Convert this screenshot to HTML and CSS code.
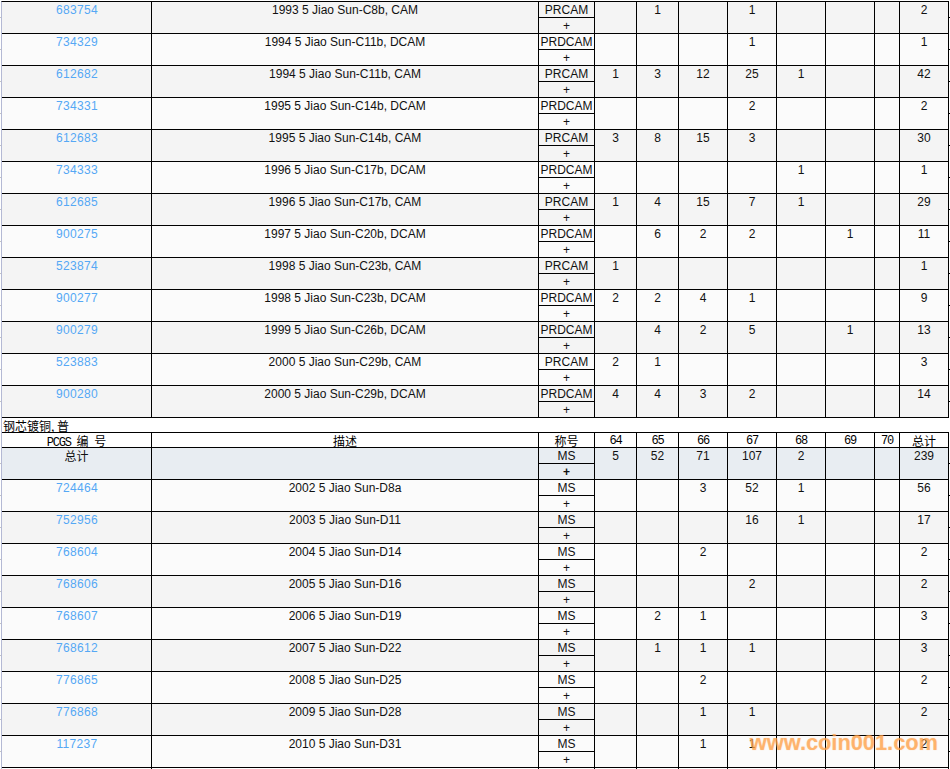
FILE: index.html
```html
<!DOCTYPE html>
<html lang="zh-CN">
<head>
<meta charset="utf-8">
<title>PCGS 5 Jiao</title>
<link rel="stylesheet" href="styles.css">
</head>
<body>
<div class="sheet">
<table class="coins">
<colgroup><col class="c-id"><col class="c-desc"><col class="c-grade"><col class="c-64"><col class="c-65"><col class="c-66"><col class="c-67"><col class="c-68"><col class="c-69"><col class="c-70"><col class="c-total"></colgroup>
<tbody>
<tr class="odd"><td class="id"><a href="#">683754</a></td><td class="desc">1993 5 Jiao Sun-C8b, CAM</td><td class="grade"><div class="g-top">PRCAM</div><div class="g-bot">+</div></td><td></td><td>1</td><td></td><td>1</td><td></td><td></td><td></td><td class="total">2</td></tr>
<tr class="even"><td class="id"><a href="#">734329</a></td><td class="desc">1994 5 Jiao Sun-C11b, DCAM</td><td class="grade"><div class="g-top">PRDCAM</div><div class="g-bot">+</div></td><td></td><td></td><td></td><td>1</td><td></td><td></td><td></td><td class="total">1</td></tr>
<tr class="odd"><td class="id"><a href="#">612682</a></td><td class="desc">1994 5 Jiao Sun-C11b, CAM</td><td class="grade"><div class="g-top">PRCAM</div><div class="g-bot">+</div></td><td>1</td><td>3</td><td>12</td><td>25</td><td>1</td><td></td><td></td><td class="total">42</td></tr>
<tr class="even"><td class="id"><a href="#">734331</a></td><td class="desc">1995 5 Jiao Sun-C14b, DCAM</td><td class="grade"><div class="g-top">PRDCAM</div><div class="g-bot">+</div></td><td></td><td></td><td></td><td>2</td><td></td><td></td><td></td><td class="total">2</td></tr>
<tr class="odd"><td class="id"><a href="#">612683</a></td><td class="desc">1995 5 Jiao Sun-C14b, CAM</td><td class="grade"><div class="g-top">PRCAM</div><div class="g-bot">+</div></td><td>3</td><td>8</td><td>15</td><td>3</td><td></td><td></td><td></td><td class="total">30</td></tr>
<tr class="even"><td class="id"><a href="#">734333</a></td><td class="desc">1996 5 Jiao Sun-C17b, DCAM</td><td class="grade"><div class="g-top">PRDCAM</div><div class="g-bot">+</div></td><td></td><td></td><td></td><td></td><td>1</td><td></td><td></td><td class="total">1</td></tr>
<tr class="odd"><td class="id"><a href="#">612685</a></td><td class="desc">1996 5 Jiao Sun-C17b, CAM</td><td class="grade"><div class="g-top">PRCAM</div><div class="g-bot">+</div></td><td>1</td><td>4</td><td>15</td><td>7</td><td>1</td><td></td><td></td><td class="total">29</td></tr>
<tr class="even"><td class="id"><a href="#">900275</a></td><td class="desc">1997 5 Jiao Sun-C20b, DCAM</td><td class="grade"><div class="g-top">PRDCAM</div><div class="g-bot">+</div></td><td></td><td>6</td><td>2</td><td>2</td><td></td><td>1</td><td></td><td class="total">11</td></tr>
<tr class="odd"><td class="id"><a href="#">523874</a></td><td class="desc">1998 5 Jiao Sun-C23b, CAM</td><td class="grade"><div class="g-top">PRCAM</div><div class="g-bot">+</div></td><td>1</td><td></td><td></td><td></td><td></td><td></td><td></td><td class="total">1</td></tr>
<tr class="even"><td class="id"><a href="#">900277</a></td><td class="desc">1998 5 Jiao Sun-C23b, DCAM</td><td class="grade"><div class="g-top">PRDCAM</div><div class="g-bot">+</div></td><td>2</td><td>2</td><td>4</td><td>1</td><td></td><td></td><td></td><td class="total">9</td></tr>
<tr class="odd"><td class="id"><a href="#">900279</a></td><td class="desc">1999 5 Jiao Sun-C26b, DCAM</td><td class="grade"><div class="g-top">PRDCAM</div><div class="g-bot">+</div></td><td></td><td>4</td><td>2</td><td>5</td><td></td><td>1</td><td></td><td class="total">13</td></tr>
<tr class="even"><td class="id"><a href="#">523883</a></td><td class="desc">2000 5 Jiao Sun-C29b, CAM</td><td class="grade"><div class="g-top">PRCAM</div><div class="g-bot">+</div></td><td>2</td><td>1</td><td></td><td></td><td></td><td></td><td></td><td class="total">3</td></tr>
<tr class="odd"><td class="id"><a href="#">900280</a></td><td class="desc">2000 5 Jiao Sun-C29b, DCAM</td><td class="grade"><div class="g-top">PRDCAM</div><div class="g-bot">+</div></td><td>4</td><td>4</td><td>3</td><td>2</td><td></td><td></td><td></td><td class="total">14</td></tr>
<tr class="section"><td colspan="11">钢芯镀铜, 普</td></tr>
<tr class="head"><td class="h-id"><span class="latin">PCGS</span> 编 号</td><td>描述</td><td>称号</td><td class="latin">64</td><td class="latin">65</td><td class="latin">66</td><td class="latin">67</td><td class="latin">68</td><td class="latin">69</td><td class="latin">70</td><td>总计</td></tr>
<tr class="sum"><td class="id cjk">总计</td><td class="desc"></td><td class="grade"><div class="g-top">MS</div><div class="g-bot">+</div></td><td>5</td><td>52</td><td>71</td><td>107</td><td>2</td><td></td><td></td><td class="total">239</td></tr>
<tr class="even"><td class="id"><a href="#">724464</a></td><td class="desc">2002 5 Jiao Sun-D8a</td><td class="grade"><div class="g-top">MS</div><div class="g-bot">+</div></td><td></td><td></td><td>3</td><td>52</td><td>1</td><td></td><td></td><td class="total">56</td></tr>
<tr class="odd"><td class="id"><a href="#">752956</a></td><td class="desc">2003 5 Jiao Sun-D11</td><td class="grade"><div class="g-top">MS</div><div class="g-bot">+</div></td><td></td><td></td><td></td><td>16</td><td>1</td><td></td><td></td><td class="total">17</td></tr>
<tr class="even"><td class="id"><a href="#">768604</a></td><td class="desc">2004 5 Jiao Sun-D14</td><td class="grade"><div class="g-top">MS</div><div class="g-bot">+</div></td><td></td><td></td><td>2</td><td></td><td></td><td></td><td></td><td class="total">2</td></tr>
<tr class="odd"><td class="id"><a href="#">768606</a></td><td class="desc">2005 5 Jiao Sun-D16</td><td class="grade"><div class="g-top">MS</div><div class="g-bot">+</div></td><td></td><td></td><td></td><td>2</td><td></td><td></td><td></td><td class="total">2</td></tr>
<tr class="even"><td class="id"><a href="#">768607</a></td><td class="desc">2006 5 Jiao Sun-D19</td><td class="grade"><div class="g-top">MS</div><div class="g-bot">+</div></td><td></td><td>2</td><td>1</td><td></td><td></td><td></td><td></td><td class="total">3</td></tr>
<tr class="odd"><td class="id"><a href="#">768612</a></td><td class="desc">2007 5 Jiao Sun-D22</td><td class="grade"><div class="g-top">MS</div><div class="g-bot">+</div></td><td></td><td>1</td><td>1</td><td>1</td><td></td><td></td><td></td><td class="total">3</td></tr>
<tr class="even"><td class="id"><a href="#">776865</a></td><td class="desc">2008 5 Jiao Sun-D25</td><td class="grade"><div class="g-top">MS</div><div class="g-bot">+</div></td><td></td><td></td><td>2</td><td></td><td></td><td></td><td></td><td class="total">2</td></tr>
<tr class="odd"><td class="id"><a href="#">776868</a></td><td class="desc">2009 5 Jiao Sun-D28</td><td class="grade"><div class="g-top">MS</div><div class="g-bot">+</div></td><td></td><td></td><td>1</td><td>1</td><td></td><td></td><td></td><td class="total">2</td></tr>
<tr class="even"><td class="id"><a href="#">117237</a></td><td class="desc">2010 5 Jiao Sun-D31</td><td class="grade"><div class="g-top">MS</div><div class="g-bot">+</div></td><td></td><td></td><td>1</td><td>1</td><td></td><td></td><td></td><td class="total">2</td></tr>
<tr class="stub"><td></td><td></td><td></td><td></td><td></td><td></td><td></td><td></td><td></td><td></td><td></td></tr>
</tbody>
</table>
<div class="watermark">www.coin001.com</div>
</div>
</body>
</html>
```
FILE: styles.css
```css
html, body {
  margin: 0;
  padding: 0;
  background: #fff;
}
.sheet {
  position: relative;
  width: 950px;
  height: 769px;
  overflow: hidden;
  padding: 1px 0 0 1px;
  box-sizing: border-box;
  font-family: "Liberation Sans", Arial, "Noto Sans CJK SC", sans-serif;
  font-size: 12px;
  color: #111;
}
.coins {
  table-layout: fixed;
  border-collapse: separate;
  border-spacing: 0;
  width: 948px;
  border-left: 1px solid #b4b9d4;
  border-top: 1px solid #000;
}
.c-id { width: 150px; }
.c-desc { width: 387px; }
.c-grade { width: 56px; }
.c-64, .c-65 { width: 42px; }
.c-66, .c-67, .c-68, .c-69, .c-total { width: 49px; }
.c-70 { width: 25px; }
.coins td {
  position: relative;
  box-sizing: border-box;
  height: 32px;
  padding: 1px 0 0;
  border-right: 1px solid #000;
  border-bottom: 1px solid #000;
  text-align: center;
  vertical-align: top;
  line-height: 14px;
}
.odd td { background: #f4f4f4; }
.even td { background: #fbfbfb; }
.sum td { background: #e8edf2; }
.id a {
  margin-left: 1px;
  color: #55a8f5;
  text-decoration: none;
  letter-spacing: 0.33px;
}
.cjk { font-family: "Noto Sans CJK SC", sans-serif; }
.coins td.grade { padding: 0; }
.g-top {
  box-sizing: border-box;
  height: 16px;
  padding-top: 1px;
  border-bottom: 1px solid #000;
  line-height: 14px;
}
.g-bot {
  height: 15px;
  padding-top: 1px;
  box-sizing: border-box;
  line-height: 14px;
}
.sum .g-bot { font-weight: bold; }
.total::after {
  content: "";
  position: absolute;
  left: 49px;
  top: 15px;
  width: 1px;
  height: 1px;
  background: #000;
}
.id::before {
  content: "";
  position: absolute;
  left: -2px;
  top: 15px;
  width: 1px;
  height: 1px;
  background: #c4c4c4;
}
.coins .section td {
  height: 15px;
  padding: 1px 0 0 1px;
  border-right: 0;
  text-align: left;
  font-family: "Noto Sans CJK SC", sans-serif;
  line-height: 13px;
  color: #000;
  background: #fff;
}
.coins .head td {
  height: 15px;
  padding: 1px 0 0;
  font-family: "Noto Sans CJK SC", sans-serif;
  line-height: 13px;
  color: #000;
  background: #fff;
}
.coins .head .h-id { word-spacing: 3px; }
.coins .head span.latin {
  font-family: "Liberation Mono", monospace;
  font-size: 12px;
  letter-spacing: -1.2px;
  line-height: 0;
}
.coins .head td.latin {
  padding-top: 2px;
  font-family: "Liberation Mono", monospace;
  font-size: 12px;
  letter-spacing: -1.2px;
  line-height: 12px;
}
.coins .stub td {
  height: 1px;
  padding: 0;
  border-bottom: 0;
  background: #fff;
  line-height: 1px;
}
.watermark {
  position: absolute;
  right: 12px;
  bottom: 15px;
  font-family: "Liberation Sans", Arial, sans-serif;
  font-weight: bold;
  font-size: 21.8px;
  line-height: 22px;
  color: rgba(255, 160, 70, 0.6);
  text-shadow: 0 0 1px rgba(255, 160, 70, 0.5);
  pointer-events: none;
}
```
